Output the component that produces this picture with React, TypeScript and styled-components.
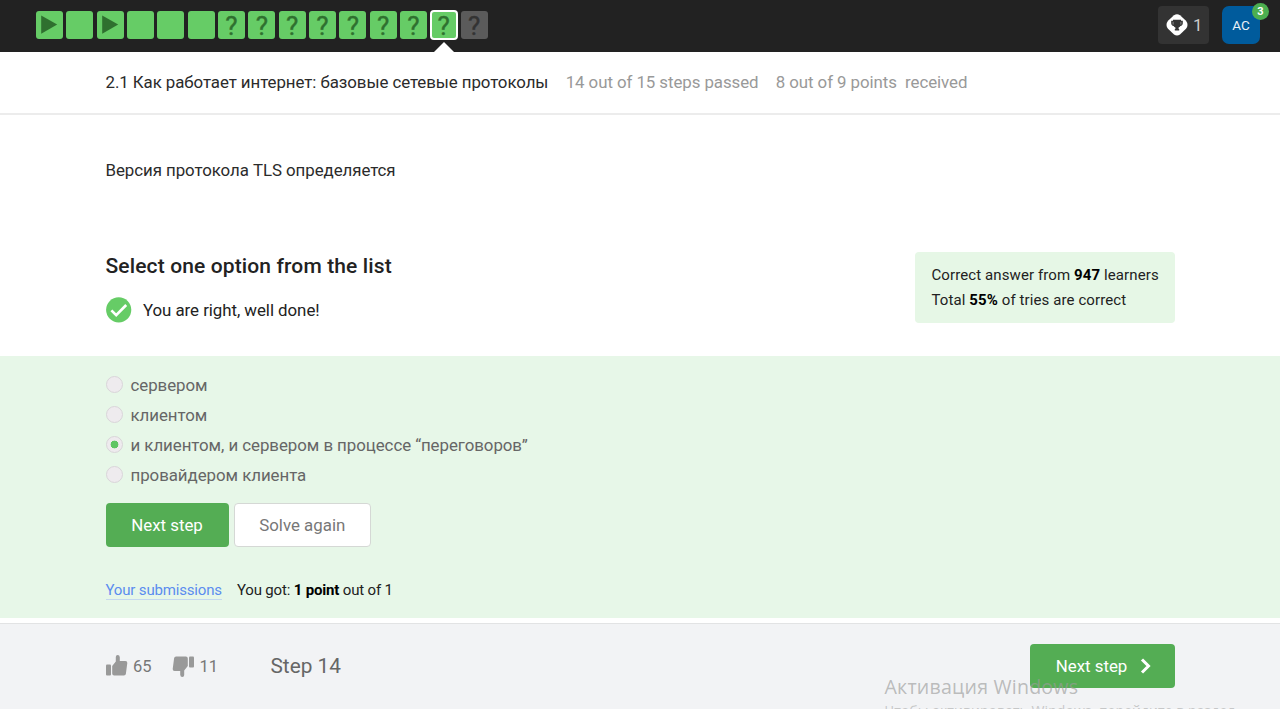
import React from 'react';
import styled, { createGlobalStyle } from 'styled-components';

const GlobalStyle = createGlobalStyle`
  * { box-sizing: border-box; }
  body { margin: 0; background: #fff; font-family: Roboto, "Liberation Sans", sans-serif; color: #222; overflow: hidden; }
`;

const Page = styled.div`
  position: relative;
  display: flex;
  flex-direction: column;
  height: 709px;
  overflow: hidden;
`;

const TopBar = styled.header`
  display: flex;
  justify-content: space-between;
  height: 51.6px;
  padding: 6px 20px 0 36px;
  background: #222;
`;

const Steps = styled.nav`
  display: flex;
  align-items: center;
  gap: 3.33px;
  height: 38.4px;
`;

type StepState = 'passed' | 'current' | 'pending';

const StepTile = styled.div<{ $state: StepState }>`
  position: relative;
  display: flex;
  align-items: center;
  justify-content: center;
  width: 27px;
  height: ${p => (p.$state === 'current' ? 30 : 28)}px;
  border-radius: 3px;
  background: ${p => (p.$state === 'pending' ? '#5b5b5b' : '#66cc66')};
  color: ${p => (p.$state === 'pending' ? '#333' : '#2f702f')};
  border: ${p => (p.$state === 'current' ? '2px solid #fff' : '0')};
  font-size: 26px;
  font-weight: 400;
  line-height: 28px;
  -webkit-text-stroke: 0.4px currentColor;
  ${p => p.$state === 'current' && `
    width: 28px;
    margin: 0 -0.5px;
    border-radius: 4px;
  `}
`;

const Mark = styled.span`
  padding-top: 1.5px;
`;

const Pointer = styled.i`
  position: absolute;
  left: 50%;
  top: 30px;
  margin-left: -10px;
  border: 10px solid transparent;
  border-top: 0;
  border-bottom: 10px solid #fff;
`;

const Account = styled.div`
  display: flex;
  gap: 13px;
`;

const Awards = styled.div`
  display: flex;
  align-items: center;
  gap: 5px;
  width: 51px;
  height: 38px;
  padding-left: 8px;
  border-radius: 4px;
  background: #333;
  color: #ccc;
  font-size: 17px;
`;

const Avatar = styled.div`
  position: relative;
  display: flex;
  align-items: center;
  justify-content: center;
  width: 38px;
  height: 38px;
  border-radius: 7px;
  background: #005b9c;
  color: #e8f1f7;
  font-size: 13.5px;
`;

const Count = styled.span`
  position: absolute;
  right: -9px;
  top: -3px;
  width: 17px;
  height: 17px;
  border-radius: 50%;
  background: #4caf50;
  color: #fff;
  font-size: 11px;
  font-weight: 700;
  line-height: 17px;
  text-align: center;
`;

const LessonBar = styled.div`
  display: flex;
  align-items: center;
  gap: 17.3px;
  height: 63px;
  padding: 0 105.5px 1px;
  border-bottom: 2px solid #ececec;
  font-size: 16.87px;
  letter-spacing: -0.07px;
  white-space: pre;
`;

const LessonTitle = styled.span`
  color: #2b2b2b;
`;

const Progress = styled.span`
  color: #999;
`;

const Question = styled.p`
  margin: 0;
  padding: 45.3px 105.5px 0;
  height: 137.4px;
  color: #2b2b2b;
  font-size: 16.87px;
  letter-spacing: -0.06px;
  line-height: 20px;
`;

const Verdict = styled.section`
  display: flex;
  justify-content: space-between;
  align-items: flex-start;
  height: 104px;
  padding: 0 105px 0 105.5px;
`;

const Heading = styled.h2`
  margin: 2px 0 18px;
  font-size: 21px;
  font-weight: 500;
  letter-spacing: 0.13px;
  line-height: 25px;
`;

const Message = styled.div`
  display: flex;
  align-items: center;
  gap: 11.5px;
  height: 26px;
  font-size: 16.87px;
  letter-spacing: -0.05px;
`;

const Stats = styled.div`
  width: 260px;
  height: 71px;
  padding: 11px 0 0 16.5px;
  border-radius: 4px;
  background: #e6f7e6;
  font-size: 15px;
  letter-spacing: 0.1px;
  line-height: 25px;
  white-space: nowrap;
  b { color: #000; }
`;

const Answer = styled.section`
  height: 262px;
  padding: 13px 105.5px 0;
  background: #e7f7e8;
`;

const Option = styled.label`
  display: flex;
  align-items: center;
  gap: 8px;
  height: 30.2px;
  color: #666;
  font-size: 16.87px;
  letter-spacing: -0.05px;
`;

const OptionText = styled.span`
  padding-top: 1px;
`;

const Radio = styled.span<{ $checked?: boolean }>`
  width: 17px;
  height: 17px;
  border: 1px solid #d9d5d9;
  border-radius: 50%;
  background: ${p => (p.$checked ? 'radial-gradient(circle, #5fc564 3.6px, #eeebee 4.2px)' : '#eeebee')};
`;

const Actions = styled.div`
  display: flex;
  gap: 5px;
  margin-top: 13.6px;
`;

const Button = styled.button<{ $secondary?: boolean; $width: number }>`
  display: flex;
  align-items: center;
  justify-content: center;
  gap: 13px;
  width: ${p => p.$width}px;
  height: 44px;
  padding: 0;
  border: ${p => (p.$secondary ? '1px solid #d5d8d5' : '0')};
  border-radius: 4px;
  background: ${p => (p.$secondary ? '#fff' : '#54ad54')};
  color: ${p => (p.$secondary ? '#777' : '#fff')};
  font: 400 16.87px Roboto, "Liberation Sans", sans-serif;
`;

const Submissions = styled.div`
  display: flex;
  gap: 15px;
  margin-top: 34.6px;
  font-size: 15px;
  letter-spacing: -0.17px;
  line-height: 17.5px;
  b { color: #000; }
`;

const Link = styled.a`
  color: #5b8def;
  border-bottom: 1px solid #c5d9ef;
`;

const Footer = styled.footer`
  display: flex;
  align-items: flex-start;
  justify-content: space-between;
  height: 86px;
  margin-top: 5px;
  padding: 20px 105px 0 105.5px;
  border-top: 1px solid #e2e3e4;
  background: #f2f3f5;
`;

const FooterLeft = styled.div`
  display: flex;
  align-items: center;
  height: 45px;
  color: #777;
  font-size: 16.5px;
`;

const Vote = styled.span<{ $width: number }>`
  display: flex;
  align-items: center;
  gap: 5.5px;
  width: ${p => p.$width}px;
`;

const StepLabel = styled.span`
  color: #666;
  font-size: 20.8px;
`;

const Watermark = styled.div`
  position: absolute;
  left: 884.5px;
  top: 673px;
  color: rgba(155, 155, 155, 0.65);
  font-family: "Open Sans", "Noto Sans", sans-serif;
  font-size: 19.6px;
  letter-spacing: 0.2px;
  line-height: 27px;
  white-space: nowrap;
`;

const WatermarkHint = styled.div`
  color: rgba(155, 155, 155, 0.5);
  font-size: 14px;
  letter-spacing: 0.05px;
  line-height: 21px;
`;

const PlayIcon = () => (
  <svg width="27" height="28" viewBox="0 0 27 28"><path d="M5.2 4.5 21.2 13.6 5.2 22.7z" fill="#2f702f" /></svg>
);

const TrophyIcon = () => (
  <svg width="22" height="22" viewBox="0 0 22 22">
    <path d="M8 1.3Q11-.7 14 1.3L20 6.8Q23 11 20 14.8L14 20.4Q11 22.6 8 20.4L2 14.8Q-1 11 2 6.8z" fill="#fff" />
    <path d="M7 5.8h8v.9h1.8v2.6c0 1.5-.9 2.5-2.4 2.8-.5.7-1 1.2-1.8 1.5v1.3h.6v1.5H8.8v-1.5h.6v-1.3c-.8-.3-1.3-.8-1.8-1.5-1.5-.3-2.4-1.3-2.4-2.8V6.7H7z" fill="#333" />
    <path d="M7.1 7.8v2.8M14.9 7.8v2.8" stroke="#aaa" strokeWidth=".7" />
  </svg>
);

const CheckIcon = () => (
  <svg width="26" height="26" viewBox="0 0 26 26">
    <circle cx="12.7" cy="12.8" r="12.6" fill="#66cc66" />
    <path d="m5.4 13.4 4.8 4.7L20.2 8" fill="none" stroke="#fff" strokeWidth="2.7" />
  </svg>
);

const ThumbIcon = ({ down = false }: { down?: boolean }) => (
  <svg width="22" height="24" viewBox="0 0 22 24">
    <g transform={down ? 'rotate(180 11 12)' : undefined} fill="#999">
      <rect x="0" y="10.5" width="5" height="11" rx="1" />
      <path d="M6.2 12 9.8 7.5V3Q9.8 1 11.7 1t2.1 2.2V7h5.6q2.1 0 1.9 2l-1.4 10.8q-.2 1.7-2 1.7H8.2q-2 0-2-2z" />
    </g>
  </svg>
);

const ChevronIcon = () => (
  <svg width="11" height="16" viewBox="0 0 11 16"><path d="m2 1.5 6.5 6.5L2 14.5" fill="none" stroke="#fff" strokeWidth="3" /></svg>
);

const NextLabel = styled.span`
  padding-left: 2px;
`;

const steps = ['play', '', 'play', '', '', '', ...Array(9).fill('?')];
const options = ['сервером', 'клиентом', 'и клиентом, и сервером в процессе “переговоров”', 'провайдером клиента'];

export default function App() {
  return (
    <>
      <GlobalStyle />
      <Page>
        <TopBar>
          <Steps>
            {steps.map((kind, i) => (
              <StepTile key={i} $state={i === 13 ? 'current' : i === 14 ? 'pending' : 'passed'}>
                {kind === 'play' ? <PlayIcon /> : <Mark>{kind}</Mark>}
                {i === 13 && <Pointer />}
              </StepTile>
            ))}
          </Steps>
          <Account>
            <Awards><TrophyIcon />1</Awards>
            <Avatar>AC<Count>3</Count></Avatar>
          </Account>
        </TopBar>
        <LessonBar>
          <LessonTitle>2.1 Как работает интернет: базовые сетевые протоколы</LessonTitle>
          <Progress>14 out of 15 steps passed</Progress>
          <Progress>{'8 out of 9 points  received'}</Progress>
        </LessonBar>
        <Question>Версия протокола TLS определяется</Question>
        <Verdict>
          <div>
            <Heading>Select one option from the list</Heading>
            <Message><CheckIcon />You are right, well done!</Message>
          </div>
          <Stats>
            Correct answer from <b>947</b> learners<br />
            Total <b>55%</b> of tries are correct
          </Stats>
        </Verdict>
        <Answer>
          {options.map((text, i) => (
            <Option key={text}><Radio $checked={i === 2} /><OptionText>{text}</OptionText></Option>
          ))}
          <Actions>
            <Button $width={123}>Next step</Button>
            <Button $width={137.5} $secondary>Solve again</Button>
          </Actions>
          <Submissions>
            <Link>Your submissions</Link>
            <span>You got: <b>1 point</b> out of 1</span>
          </Submissions>
        </Answer>
        <Footer>
          <FooterLeft>
            <Vote $width={66.5}><ThumbIcon />65</Vote>
            <Vote $width={98.5}><ThumbIcon down />11</Vote>
            <StepLabel>Step 14</StepLabel>
          </FooterLeft>
          <Button $width={145}><NextLabel>Next step</NextLabel><ChevronIcon /></Button>
        </Footer>
        <Watermark>
          Активация Windows
          <WatermarkHint>Чтобы активировать Windows, перейдите в раздел</WatermarkHint>
        </Watermark>
      </Page>
    </>
  );
}
